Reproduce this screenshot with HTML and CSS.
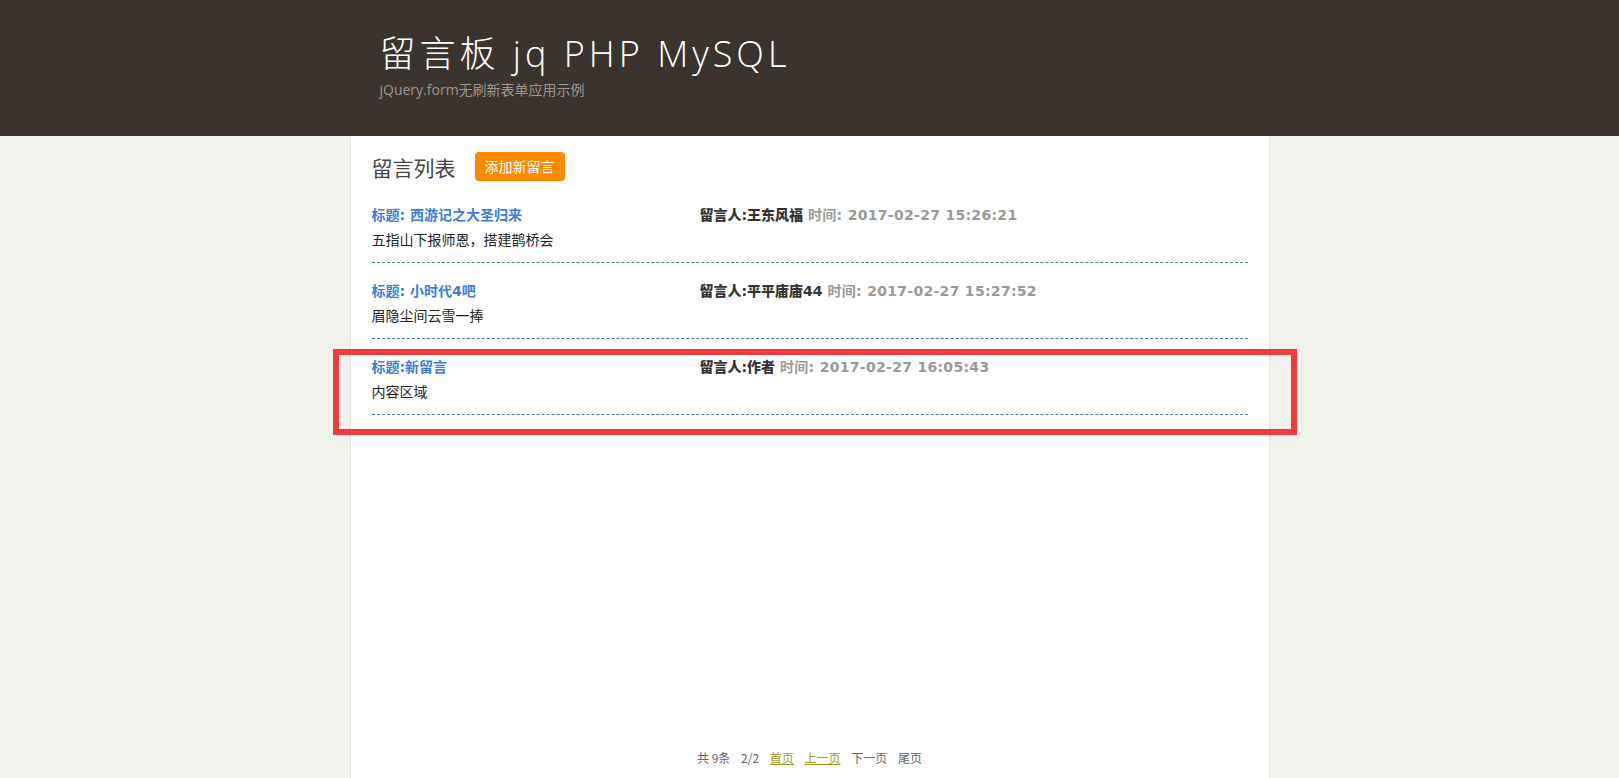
FILE: index.html
```html
<!DOCTYPE html>
<html lang="zh-CN">
<head>
<meta charset="utf-8">
<title>留言板 jq PHP MySQL</title>
<link rel="stylesheet" href="styles.css">
</head>
<body>
<header class="site-header">
  <div class="header-inner">
    <h1 class="site-title">留言板 jq PHP MySQL</h1>
    <p class="site-subtitle">jQuery.form无刷新表单应用示例</p>
  </div>
</header>
<main class="page">
  <div class="list-head">
    <h2 class="list-title">留言列表</h2>
    <a class="btn-add" href="#">添加新留言</a>
  </div>
  <ul class="msg-list">
    <li class="msg">
      <div class="msg-top">
        <span class="msg-subject">标题: 西游记之大圣归来</span>
        <span class="msg-meta"><b class="msg-author">留言人:王东风福</b> <span class="msg-time">时间: 2017-02-27 15:26:21</span></span>
      </div>
      <p class="msg-body">五指山下报师恩，搭建鹊桥会</p>
    </li>
    <li class="msg">
      <div class="msg-top">
        <span class="msg-subject">标题: 小时代4吧</span>
        <span class="msg-meta"><b class="msg-author">留言人:平平庸庸44</b> <span class="msg-time">时间: 2017-02-27 15:27:52</span></span>
      </div>
      <p class="msg-body">眉隐尘间云雪一捧</p>
    </li>
    <li class="msg msg-marked">
      <div class="msg-top">
        <span class="msg-subject">标题:新留言</span>
        <span class="msg-meta"><b class="msg-author">留言人:作者</b> <span class="msg-time">时间: 2017-02-27 16:05:43</span></span>
      </div>
      <p class="msg-body">内容区域</p>
      <span class="highlight-box"></span>
    </li>
  </ul>
  <nav class="pager">
    <span>共&nbsp;9条</span>
    <span>2/2</span>
    <a href="#" class="pager-link">首页</a>
    <a href="#" class="pager-link">上一页</a>
    <span>下一页</span>
    <span>尾页</span>
  </nav>
</main>
</body>
</html>
```

FILE: styles.css
```css
html, body {
  margin: 0;
  padding: 0;
}
body {
  background: #f2f2ec;
  font-family: "DejaVu Sans", "Noto Sans CJK SC", sans-serif;
  font-size: 14px;
  color: #222;
  height: 778px;
  display: flex;
  flex-direction: column;
  overflow: hidden;
}
.site-header {
  background: #3b332d;
  height: 136px;
  flex: none;
}
.header-inner {
  width: 920px;
  margin: 0 auto;
  padding: 27px 0 0 30px;
  box-sizing: border-box;
}
.site-title {
  margin: 0;
  font-family: "Open Sans", "Noto Sans CJK SC", sans-serif;
  font-weight: 300;
  font-size: 36px;
  line-height: 54px;
  letter-spacing: 4px;
  color: #fff;
}
.site-subtitle {
  margin: 0;
  font-family: "Open Sans", "Noto Sans CJK SC", sans-serif;
  font-size: 14px;
  line-height: 18px;
  color: #9d978f;
}
.page {
  width: 876px;
  margin: 0 auto;
  flex: 1;
  background: #fff;
  border-left: 1px solid #e6e6de;
  border-right: 1px solid #e6e6de;
  padding: 0 21px;
  display: flex;
  flex-direction: column;
}
.list-head {
  display: flex;
  align-items: center;
  padding: 16px 0 6px;
  height: 29px;
}
.list-title {
  margin: 0 19px 0 0;
  font-family: "Noto Sans CJK SC", sans-serif;
  font-weight: normal;
  font-size: 21px;
  color: #444;
}
.btn-add {
  display: inline-block;
  height: 29px;
  line-height: 29px;
  padding: 0 10px;
  background: #ff8a00;
  color: #fff;
  border-radius: 4px;
  text-decoration: none;
  font-family: "Noto Sans CJK SC", sans-serif;
  font-size: 14px;
}
.msg-list {
  list-style: none;
  margin: 0;
  padding: 0;
}
.msg {
  padding: 16px 0 10px;
  border-bottom: 1px dashed #4d79a8;
}
.msg-marked {
  position: relative;
}
.msg-top {
  display: grid;
  grid-template-columns: 328px 1fr;
  line-height: 25px;
  font-weight: bold;
}
.msg-subject {
  color: #3b7ddd;
}
.msg-author {
  color: #333;
}
.msg-time {
  color: #999;
  letter-spacing: 0.3px;
}
.msg-body {
  margin: 0;
  line-height: 24px;
  color: #222;
}
.highlight-box {
  position: absolute;
  left: -39px;
  top: 10px;
  width: 952px;
  height: 74px;
  border: 6px solid #f43b3b;
}
.pager {
  margin-top: auto;
  padding-bottom: 10px;
  text-align: center;
  font-family: "Noto Sans CJK SC", sans-serif;
  font-size: 12px;
  line-height: 20px;
  color: #666;
}
.pager > * {
  margin: 0 4px;
}
.pager-link {
  color: #9a9a18;
}
```
